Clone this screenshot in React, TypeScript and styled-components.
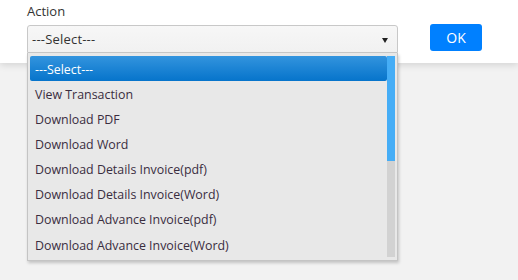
import styled, { createGlobalStyle } from "styled-components";

const GlobalStyle = createGlobalStyle`
	html, body {
		margin: 0;
		padding: 0;
		background: #f2f2f2;
		font-family: "Open Sans", "Noto Sans", sans-serif;
	}
`;

const options = [
	"---Select---",
	"View Transaction",
	"Download PDF",
	"Download Word",
	"Download Details Invoice(pdf)",
	"Download Details Invoice(Word)",
	"Download Advance Invoice(pdf)",
	"Download Advance Invoice(Word)",
];

const App = () => {
	return (
		<>
			<GlobalStyle />
			<Page>
				<Toolbar>
					<Field>
						<Label>Action</Label>
						<SelectWrap>
							<SelectBox>
								<span>---Select---</span>
								<Caret />
							</SelectBox>
							<Menu>
								<MenuList>
									{options.map((opt, i) => (
										<MenuItem key={opt} $active={i === 0}>
											{opt}
										</MenuItem>
									))}
								</MenuList>
								<ScrollTrack>
									<ScrollThumb />
								</ScrollTrack>
							</Menu>
						</SelectWrap>
					</Field>
					<OkButton>OK</OkButton>
				</Toolbar>
				<Body />
			</Page>
		</>
	);
};

export default App;

const Page = styled.div`
	width: 518px;
	height: 280px;
	display: flex;
	flex-direction: column;
	overflow: hidden;
`;

const Toolbar = styled.div`
	height: 63px;
	background: #fff;
	box-shadow: 0 2px 7px rgba(0, 0, 0, 0.13);
	position: relative;
	z-index: 2;
	display: flex;
	align-items: flex-start;
	padding-left: 27px;
	box-sizing: border-box;
`;

const Body = styled.div`
	flex: 1;
	background: #f2f2f2;
`;

const Field = styled.div`
	display: flex;
	flex-direction: column;
	width: 371px;
`;

const Label = styled.label`
	font-size: 13px;
	color: #333;
	line-height: 18px;
	margin-top: 2px;
	margin-bottom: 5px;
`;

const SelectWrap = styled.div`
	position: relative;
`;

const SelectBox = styled.div`
	height: 28px;
	box-sizing: border-box;
	border: 1px solid #c8c8c8;
	border-radius: 3px 3px 0 0;
	background: linear-gradient(#f7f7f7, #f1f1f1);
	display: flex;
	align-items: center;
	justify-content: space-between;
	padding: 0 9px 0 4px;
	font-size: 13px;
	letter-spacing: 0.2px;
	color: #333;
`;

const Caret = styled.span`
	width: 0;
	height: 0;
	border-left: 3px solid transparent;
	border-right: 3px solid transparent;
	border-top: 5px solid #222;
	margin-top: 2px;
`;

const Menu = styled.div`
	position: absolute;
	top: 28px;
	left: 0;
	width: 371px;
	height: 208px;
	box-sizing: border-box;
	background: #e8e8e8;
	border: 1px solid #c4c4c4;
	border-top: none;
	box-shadow: 1px 2px 3px rgba(0, 0, 0, 0.2);
	display: flex;
	padding: 3px 2px 3px 2px;
`;

const MenuList = styled.div`
	flex: 1;
	display: flex;
	flex-direction: column;
`;

const MenuItem = styled.div<{ $active?: boolean }>`
	height: 25.15px;
	flex-shrink: 0;
	box-sizing: border-box;
	display: flex;
	align-items: center;
	padding: 1px 0 0 5px;
	font-size: 12.4px;
	color: ${(p) => (p.$active ? "#fff" : "#3a2d3f")};
	border-radius: 2px;
	background: ${(p) =>
		p.$active ? "linear-gradient(#3394de, #0674cb)" : "transparent"};
`;

const ScrollTrack = styled.div`
	width: 8px;
	background: #d2d2d2;
	display: flex;
	flex-direction: column;
`;

const ScrollThumb = styled.div`
	height: 105px;
	background: #45adf6;
`;

const OkButton = styled.button`
	margin-left: 32px;
	margin-top: 24px;
	width: 52px;
	height: 27px;
	border: none;
	border-radius: 3px;
	background: #0080ff;
	color: #fff;
	font-family: "Open Sans", "Noto Sans", sans-serif;
	font-size: 14px;
	padding: 0;
`;
